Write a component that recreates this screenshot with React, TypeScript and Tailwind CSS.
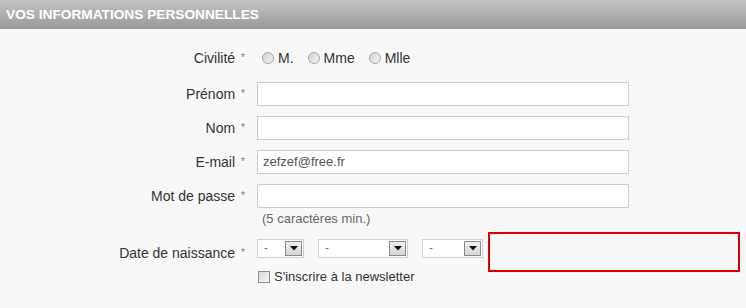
import React from "react";

const font = { fontFamily: '"Liberation Sans", Arial, Helvetica, sans-serif' };

function Star() {
  return <span className="ml-[6px] text-[10px] text-[#a86a62] align-[2px]">*</span>;
}

function Label({ children, className = "" }: { children: React.ReactNode; className?: string }) {
  return (
    <div className={`w-[257px] shrink-0 pr-[12px] text-right text-[14px] leading-[16px] text-[#333] ${className}`}>
      {children}
      <Star />
    </div>
  );
}

function Radio({ label }: { label: string }) {
  return (
    <div className="flex items-center">
      <span className="box-border w-[12px] h-[12px] rounded-full border border-[#a5a5a5] bg-gradient-to-br from-[#d2d2d2] to-[#f4f4f4]" />
      <span className="ml-[4px] text-[14px] leading-[16px] text-[#333]">{label}</span>
    </div>
  );
}

function Input({ value }: { value?: string }) {
  return (
    <div className="box-border w-[372px] h-[24px] border border-[#cccccc] bg-white flex items-center pl-[5px] text-[13px] text-[#555]">
      {value}
    </div>
  );
}

function Select({ w }: { w: string }) {
  return (
    <div className={`box-border ${w} h-[19px] border border-[#d0d0d0] bg-white flex items-stretch p-[1px]`}>
      <span className="flex-1 pl-[5px] text-[12px] leading-[15px] text-[#777]">-</span>
      <span className="box-border w-[17px] border border-[#8a8a8a] bg-gradient-to-b from-[#f0f0f0] to-[#d6d6d6] flex items-center justify-center">
        <svg width="8" height="5" viewBox="0 0 8 5">
          <path d="M0 0H8L4 4.5Z" fill="#111" />
        </svg>
      </span>
    </div>
  );
}

function Row({ label, children }: { label: string; children: React.ReactNode }) {
  return (
    <div className="flex items-center">
      <Label>{label}</Label>
      {children}
    </div>
  );
}

export default function App() {
  return (
    <div style={font} className="w-full h-[308px] bg-[#f8f8f8] overflow-hidden">
      <div className="h-[29px] bg-gradient-to-b from-[#c4c4c4] to-[#999999] flex items-center pl-[6px]">
        <span className="text-white font-bold text-[13.7px] leading-[16px]">VOS INFORMATIONS PERSONNELLES</span>
      </div>

      <div className="flex flex-col">
        <div className="mt-[17px] h-[24px] flex items-center">
          <Label>Civilité</Label>
          <div className="flex items-center gap-[14px] pl-[5px]">
            <Radio label="M." />
            <Radio label="Mme" />
            <Radio label="Mlle" />
          </div>
        </div>

        <div className="mt-[12px] flex flex-col gap-[10px]">
          <Row label="Prénom"><Input /></Row>
          <Row label="Nom"><Input /></Row>
          <Row label="E-mail"><Input value="zefzef@free.fr" /></Row>
          <Row label="Mot de passe"><Input /></Row>
        </div>

        <div className="mt-[3px] pl-[262px] text-[13px] leading-[16px] text-[#666]">(5 caractères min.)</div>

        <div className="mt-[4px] flex items-start">
          <Label className="pt-[14px]">Date de naissance</Label>
          <div className="flex items-start">
            <div className="flex flex-col pt-[8px]">
              <div className="flex items-center">
                <Select w="w-[47px]" />
                <div className="ml-[14px]"><Select w="w-[90px]" /></div>
                <div className="ml-[14px]"><Select w="w-[61px]" /></div>
              </div>
              <label className="mt-[11px] flex items-center">
                <span className="box-border ml-[1px] w-[12px] h-[12px] border border-[#8c8c8c] bg-gradient-to-br from-[#d8d8d8] to-[#f6f6f6]" />
                <span className="ml-[4px] text-[13px] leading-[15px] text-[#333]">S'inscrire à la newsletter</span>
              </label>
            </div>
            <div className="box-border ml-[5px] mt-[1px] w-[252px] h-[40px] border-2 border-[#dd0000]" />
          </div>
        </div>
      </div>
    </div>
  );
}
